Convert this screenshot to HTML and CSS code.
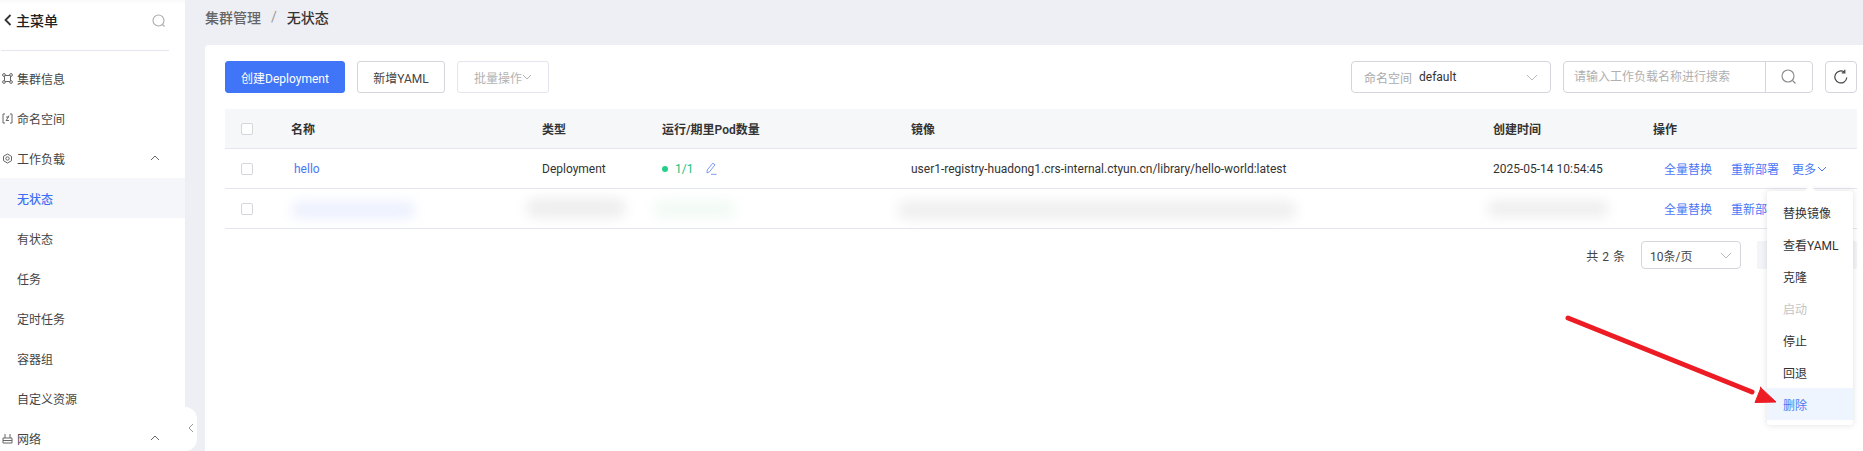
FILE: index.html
```html
<!DOCTYPE html>
<html lang="zh-CN">
<head>
<meta charset="utf-8">
<title>无状态</title>
<link rel="stylesheet" href="styles.css">
</head>
<body>
<div class="app">
  <aside class="sidebar">
    <div class="side-head">
      <svg class="back" viewBox="0 0 8 12"><path d="M6.500 1 1.500 6l5 5"/></svg>
      <span class="side-title">主菜单</span>
      <svg class="side-search" viewBox="0 0 14 14"><circle cx="6.500" cy="6.500" r="5.500"/><path d="M10.500 10.500 12.500 12.500"/></svg>
    </div>
    <nav class="menu">
      <div class="menu-item">
        <svg class="mi" viewBox="0 0 11 11"><rect x="2.500" y="2.500" width="6" height="6" rx="1"/><circle cx="2" cy="2" r="1.400"/><circle cx="9" cy="2" r="1.400"/><circle cx="2" cy="9" r="1.400"/><circle cx="9" cy="9" r="1.400"/></svg>
        <span>集群信息</span>
      </div>
      <div class="menu-item">
        <svg class="mi" viewBox="0 0 11 11"><path d="M3 1H1v9h2M8 1h2v9H8"/><path d="M7 2.500 4 8M4 4h3M4 7.500h3"/></svg>
        <span>命名空间</span>
      </div>
      <div class="menu-item">
        <svg class="mi" viewBox="0 0 11 11"><path d="M5.500 1 9.500 3.300v4.400L5.500 10 1.500 7.700V3.300z"/><circle cx="5.500" cy="5.500" r="1.700"/></svg>
        <span>工作负载</span>
        <svg class="caret" viewBox="0 0 10 6"><path d="M1 5 5 1l4 4"/></svg>
      </div>
      <div class="menu-item sub active"><span>无状态</span></div>
      <div class="menu-item sub"><span>有状态</span></div>
      <div class="menu-item sub"><span>任务</span></div>
      <div class="menu-item sub"><span>定时任务</span></div>
      <div class="menu-item sub"><span>容器组</span></div>
      <div class="menu-item sub"><span>自定义资源</span></div>
      <div class="menu-item">
        <svg class="mi" viewBox="0 0 11 11"><path d="M3 1v4M8 1v4M1 5h9v5H1zM1 7.500h9"/></svg>
        <span>网络</span>
        <svg class="caret" viewBox="0 0 10 6"><path d="M1 5 5 1l4 4"/></svg>
      </div>
    </nav>
    <div class="collapse-tab">
      <svg viewBox="0 0 6 10"><path d="M5 1 1 5l4 4"/></svg>
    </div>
  </aside>

  <main class="main">
    <div class="crumbs">
      <span class="crumb-parent">集群管理</span>
      <span class="crumb-sep">/</span>
      <span class="crumb-current">无状态</span>
    </div>

    <section class="card">
      <div class="toolbar">
        <button class="btn btn-primary btn-create">创建Deployment</button>
        <button class="btn btn-yaml">新增YAML</button>
        <button class="btn btn-disabled">批量操作<svg class="btn-caret" viewBox="0 0 10 6"><path d="M1 1l4 4 4-4"/></svg></button>
        <div class="spacer"></div>
        <div class="ns-select">
          <span class="ns-label">命名空间</span>
          <span class="ns-value">default</span>
          <svg class="select-caret" viewBox="0 0 12 7"><path d="M1 1l5 5 5-5"/></svg>
        </div>
        <div class="search">
          <span class="search-text">请输入工作负载名称进行搜索</span>
          <span class="search-btn"><svg viewBox="0 0 16 16"><circle cx="7" cy="7" r="6"/><path d="M11.500 11.500 14.500 14.500"/></svg></span>
        </div>
        <button class="btn-refresh"><svg viewBox="0 0 16 16"><path d="M13.800 8.500A6 6 0 1 1 11.500 3.200"/><path d="M11.800 0.800v3h-3"/></svg></button>
      </div>

      <table class="table">
        <colgroup>
          <col class="c1"><col class="c2"><col class="c3"><col class="c4"><col class="c5"><col class="c6"><col class="c7">
        </colgroup>
        <thead>
          <tr>
            <th><span class="check"></span></th>
            <th>名称</th>
            <th>类型</th>
            <th>运行/期里Pod数量</th>
            <th>镜像</th>
            <th>创建时间</th>
            <th>操作</th>
          </tr>
        </thead>
        <tbody>
          <tr>
            <td><span class="check"></span></td>
            <td><a class="link name-link">hello</a></td>
            <td>Deployment</td>
            <td><span class="pods"><i class="dot"></i><span class="pod-num">1/1</span><svg class="edit" viewBox="0 0 12 13"><path d="M7.800 1.200 10 2.800 4.500 9.800 2 10.800 2.200 8z"/><path d="M6 12.300h5.500"/></svg></span></td>
            <td>user1-registry-huadong1.crs-internal.ctyun.cn/library/hello-world:latest</td>
            <td>2025-05-14 10:54:45</td>
            <td><div class="actions"><a class="link">全量替换</a><a class="link">重新部署</a><a class="link more">更多<svg viewBox="0 0 10 6"><path d="M1 1l4 4 4-4"/></svg></a></div></td>
          </tr>
          <tr>
            <td><span class="check"></span></td>
            <td><div class="smudge s-name"></div></td>
            <td><div class="smudge s-type"></div></td>
            <td><div class="smudge s-pod"></div></td>
            <td><div class="smudge s-image"></div></td>
            <td><div class="smudge s-time"></div></td>
            <td><div class="actions"><a class="link">全量替换</a><a class="link">重新部署</a></div></td>
          </tr>
        </tbody>
      </table>

      <div class="pager">
        <span class="total">共 2 条</span>
        <div class="size-select">
          <span>10条/页</span>
          <svg class="select-caret" viewBox="0 0 12 7"><path d="M1 1l5 5 5-5"/></svg>
        </div>
        <div class="pager-box"></div>
      </div>

      <div class="dropdown">
        <span class="dropdown-tip"></span>
        <div class="dd-item">替换镜像</div>
        <div class="dd-item">查看YAML</div>
        <div class="dd-item">克隆</div>
        <div class="dd-item dd-disabled">启动</div>
        <div class="dd-item">停止</div>
        <div class="dd-item">回退</div>
        <div class="dd-item dd-hover">删除</div>
      </div>
    </section>
  </main>
</div>
<svg class="annotation" viewBox="0 0 1863 451">
  <path class="arrow-line" d="M1568 318 1752 392"/>
  <path class="arrow-head" d="M1776 402 1755 402.500 1761 387.500 1760 387z"/>
</svg>
</body>
</html>
```

FILE: styles.css
```css
* { box-sizing: border-box; }
html, body { margin: 0; height: 451px; overflow: hidden; }
body {
  font-family: Roboto, "Noto Sans CJK SC", "Liberation Sans", sans-serif;
  font-size: 12px;
  color: #333;
  background: #eeeff5;
}
svg { fill: none; stroke: currentColor; display: block; }
.app { display: flex; height: 451px; }

/* Sidebar */
.sidebar {
  position: relative;
  width: 185px;
  flex: none;
  background: linear-gradient(#f8f8f9, #fff 4px);
}
.side-head {
  display: flex;
  align-items: center;
  height: 51px;
  margin: 0 16px 7px 1px;
  padding: 0 4px 10px 3px;
  border-bottom: 1px solid #e4e5ee;
}
.back { width: 8px; height: 12px; color: #333; stroke-width: 1.800; }
.side-title { margin-left: 4px; font-size: 14px; font-weight: 500; color: #222; flex: 1; }
.side-search { width: 14px; height: 14px; margin: 1px -1px 0 0; color: #aaa; stroke-width: 1.100; }
.menu-item {
  display: flex;
  align-items: center;
  height: 40px;
  padding-left: 2px;
  color: #444;
  position: relative;
}
.menu-item .mi { width: 11px; height: 11px; margin-right: 4px; color: #666; stroke-width: 1; }
.menu-item.sub { padding-left: 17px; }
.menu-item.active { background: #f5f6f9; color: #3f6ff5; font-weight: 500; }
.caret { width: 10px; height: 6px; margin-left: auto; margin-right: 25px; color: #666; stroke-width: 1; }
.collapse-tab {
  position: absolute;
  left: 185px;
  top: 407px;
  width: 12px;
  height: 44px;
  background: #fff;
  border-radius: 0 12px 12px 0;
  padding: 16px 0 0 3px;
  color: #999;
}
.collapse-tab svg { width: 6px; height: 10px; stroke-width: 1; }

/* Main */
.main { flex: 1; min-width: 0; display: flex; flex-direction: column; padding-left: 20px; }
.crumbs {
  display: flex;
  align-items: center;
  gap: 10px;
  height: 45px;
  padding-bottom: 11px;
  font-size: 14px;
  font-weight: 500;
}
.crumb-parent { color: #666; }
.crumb-sep { color: #999; font-weight: 400; }
.crumb-current { color: #333; }
.card {
  position: relative;
  flex: 1;
  background: #fff;
  border-radius: 4px 0 0 0;
  padding: 16px 6px 0 20px;
}

/* Toolbar */
.toolbar { display: flex; align-items: center; height: 32px; margin-bottom: 16px; }
.btn {
  height: 32px;
  margin-right: 12px;
  border: 1px solid #d5d6dc;
  border-radius: 3px;
  background: #fff;
  color: #444;
  font: inherit;
  padding: 0;
}
.btn-primary { background: #3f75f6; border-color: #3f75f6; color: #fff; }
.btn-create { width: 120px; }
.btn-yaml { width: 88px; }
.btn-disabled {
  width: 92px;
  color: #b3b3b3;
  border-color: #e4e5ee;
  display: flex;
  align-items: center;
  justify-content: center;
}
.btn-caret { width: 10px; height: 6px; stroke-width: 1; }
.spacer { flex: 1; }
.ns-select {
  display: flex;
  align-items: center;
  width: 200px;
  height: 32px;
  padding: 0 12px;
  margin-right: 12px;
  border: 1px solid #d5d6dc;
  border-radius: 4px;
}
.ns-label { color: #aaa; margin-right: 7px; }
.ns-value { color: #333; }
.select-caret { width: 12px; height: 7px; margin-left: auto; color: #bbb; stroke-width: 1; }
.search {
  display: flex;
  width: 250px;
  height: 32px;
  margin-right: 12px;
  border: 1px solid #d5d6dc;
  border-radius: 4px;
}
.search-text { flex: 1; padding-left: 10px; line-height: 30px; color: #b0b0b0; }
.search-btn {
  width: 47px;
  border-left: 1px solid #d5d6dc;
  display: flex;
  align-items: center;
  justify-content: center;
  color: #888;
}
.search-btn svg { width: 16px; height: 16px; stroke-width: 1.100; }
.btn-refresh {
  width: 32px;
  height: 32px;
  padding: 0;
  border: 1px solid #d5d6dc;
  border-radius: 4px;
  background: #fff;
  display: flex;
  align-items: center;
  justify-content: center;
  color: #444;
}
.btn-refresh svg { width: 16px; height: 16px; stroke-width: 1.200; }

/* Table */
.table { width: 1632px; table-layout: fixed; border-collapse: separate; border-spacing: 0; }
.c1 { width: 66px; } .c2 { width: 251px; } .c3 { width: 120px; } .c4 { width: 249px; }
.c5 { width: 582px; } .c6 { width: 160px; } .c7 { width: 204px; }
.table th, .table td {
  height: 40px;
  padding: 0;
  text-align: left;
  white-space: nowrap;
  border-bottom: 1px solid #e4e5ee;
}
.table th { background: #f6f7f9; font-weight: 600; color: #333; }
.check {
  display: block;
  width: 12px;
  height: 12px;
  margin-left: 16px;
  background: #fff;
  border: 1px solid #d5d6dc;
  border-radius: 2px;
}
.link { color: #4a78f5; }
.name-link { padding-left: 3px; }
.pods { display: flex; align-items: center; }
.dot { width: 6px; height: 6px; border-radius: 50%; background: #22d08a; margin-right: 7px; }
.pod-num { color: #22c07f; margin-right: 12px; }
.edit { width: 12px; height: 13px; color: #6f8ff5; stroke-width: 0.900; }
.actions { display: flex; gap: 19px; padding-left: 11px; }
.more { display: flex; align-items: center; margin-left: -6px; gap: 1px; }
.more svg { width: 10px; height: 6px; stroke-width: 1; }
.smudge { filter: blur(6px); border-radius: 10px; }
.s-name { width: 125px; height: 18px; margin: 2px 0 0 0; background: #edf1fd; }
.s-type { width: 100px; height: 20px; margin: -2px 0 0 -16px; background: #eeeeee; }
.s-pod { width: 85px; height: 20px; margin-left: -10px; background: #f3fbf6; }
.s-image { width: 400px; height: 20px; margin: 3px 0 0 -14px; background: #f0f0f0; }
.s-time { width: 122px; height: 17px; margin: -1px 0 0 -6px; background: #efefef; }

/* Pager */
.pager { display: flex; align-items: center; justify-content: flex-end; height: 28px; margin-top: 12px; }
.total { margin-right: 16px; color: #444; word-spacing: 1px; }
.size-select {
  display: flex;
  align-items: center;
  width: 100px;
  height: 28px;
  padding: 0 8px;
  border: 1px solid #d5d6dc;
  border-radius: 4px;
  color: #444;
}
.pager-box { width: 100px; height: 28px; margin-left: 16px; background: #f3f4f7; border-radius: 2px; }

/* Dropdown */
.dropdown {
  position: absolute;
  top: 146px;
  right: 10px;
  width: 86px;
  padding: 5px 0;
  background: #fff;
  border-radius: 3px;
  box-shadow: 0 0 6px rgba(60, 60, 90, 0.16);
}
.dropdown-tip {
  position: absolute;
  top: -4px;
  left: 39px;
  width: 8px;
  height: 8px;
  background: #fff;
  transform: rotate(45deg);
}
.dd-item { position: relative; height: 32px; line-height: 36px; padding-left: 16px; color: #333; white-space: nowrap; }
.dd-disabled { color: #c4c4c4; }
.dd-hover { background: #eff5fe; color: #4a78f5; }

/* Hand-drawn annotation laid over the screenshot */
.annotation { position: absolute; left: 0; top: 0; width: 1863px; height: 451px; pointer-events: none; }
.arrow-line { stroke: #ed1c24; stroke-width: 5; stroke-linecap: round; }
.arrow-head { fill: #ed1c24; stroke: #ed1c24; stroke-width: 1; stroke-linejoin: round; }
```
